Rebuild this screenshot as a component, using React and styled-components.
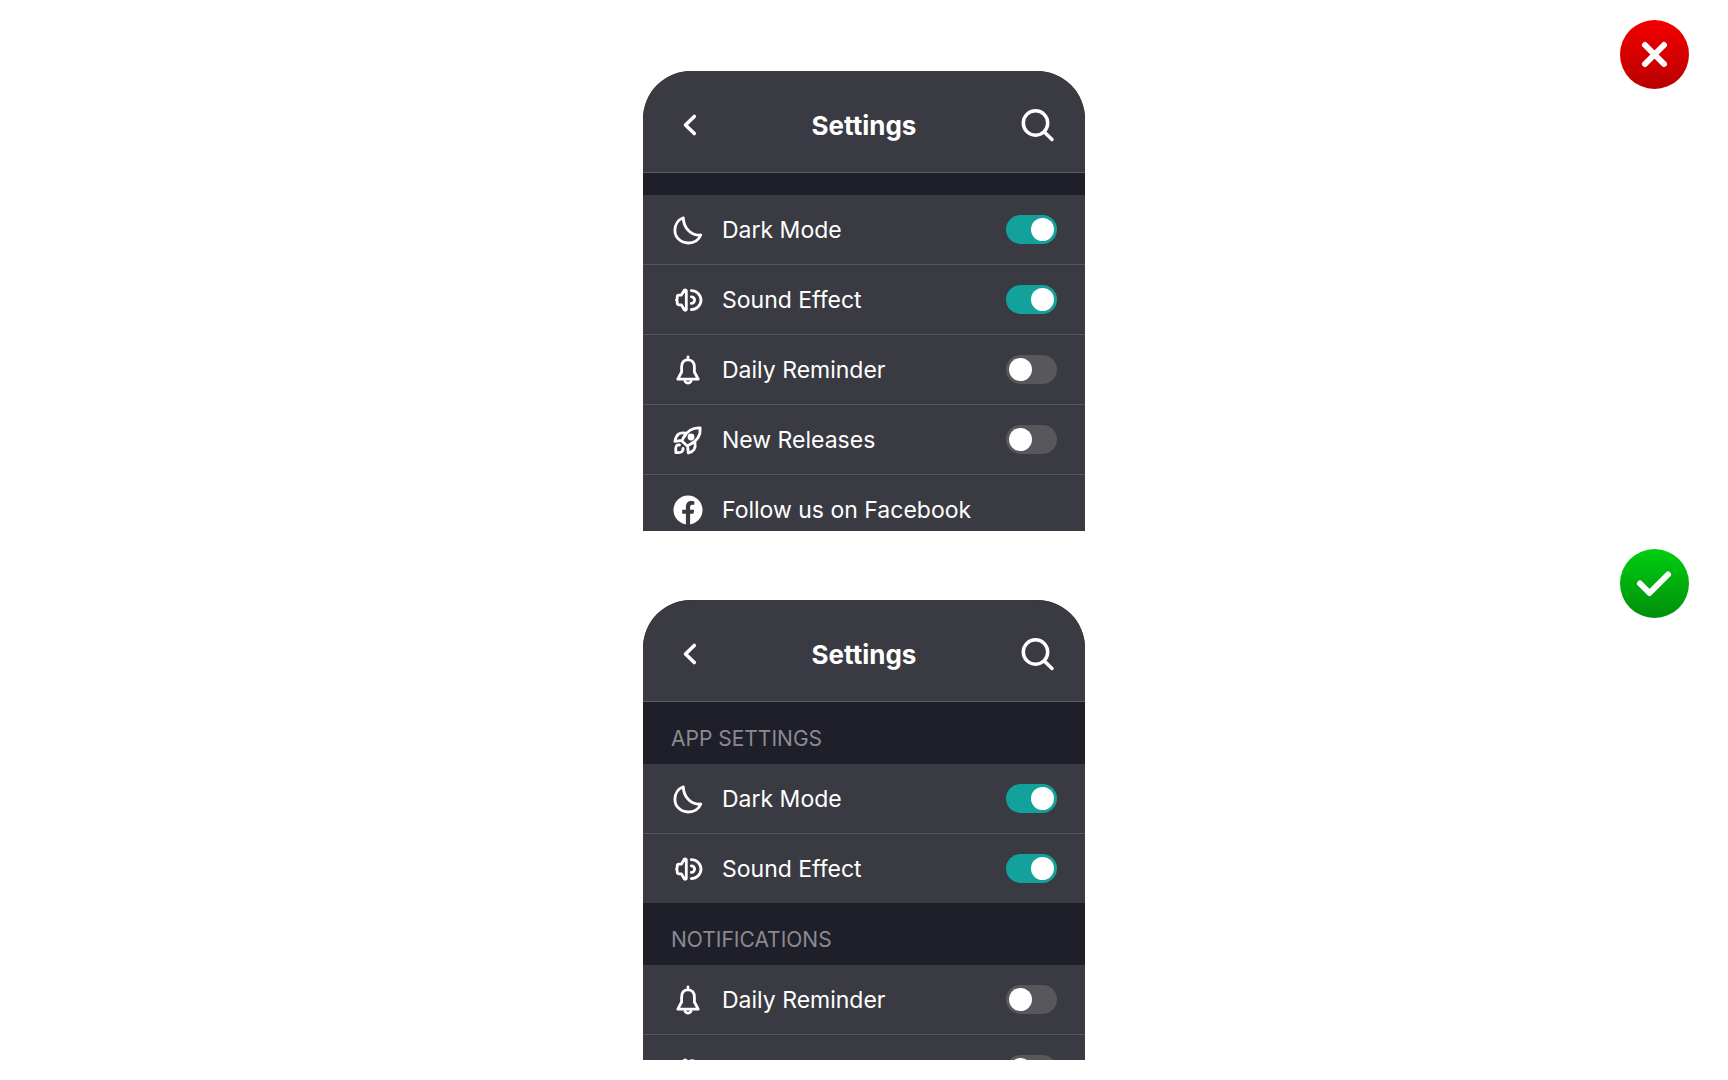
import * as React from "react"
import styled, { createGlobalStyle } from "styled-components"

const GlobalStyle = createGlobalStyle`
  * {
    box-sizing: border-box;
  }
  body {
    margin: 0;
    background: #ffffff;
    font-family: Inter, "Liberation Sans", sans-serif;
  }
`

const Page = styled.main`
  display: flex;
  flex-direction: column;
  gap: 18px;
  padding: 20px 39px;
`

const Example = styled.section`
  display: grid;
  grid-template-columns: 1fr 442px 1fr;
  align-items: start;
`

const Phone = styled.article`
  grid-column: 2;
  height: 460px;
  margin-top: 51px;
  overflow: hidden;
  border-radius: 48px 48px 0 0;
  background: #1f1f29;
  color: #ffffff;
`

const Verdict = styled.svg`
  display: block;
  justify-self: end;
  width: 69px;
  height: 69px;
`

const Header = styled.header`
  display: grid;
  grid-template-columns: 40px 1fr 40px;
  align-items: center;
  height: 102px;
  padding: 8px 28px 0;
  background: #3a3a42;
  border-bottom: 1px solid #5c5b63;
`

const Title = styled.h1`
  margin: 0;
  font-size: 26px;
  line-height: 32px;
  font-weight: 700;
  text-align: center;
`

const IconButton = styled.button`
  display: flex;
  align-items: center;
  justify-content: center;
  width: 40px;
  height: 40px;
  padding: 0;
  border: 0;
  background: none;
  color: inherit;
`

const Spacer = styled.div`
  height: 22px;
`

const GroupTitle = styled.h2`
  display: flex;
  align-items: center;
  height: 62px;
  margin: 0;
  padding: 12px 28px 0;
  color: #8b8a92;
  font-size: 21px;
  line-height: 24px;
  font-weight: 400;
  text-transform: uppercase;
`

const List = styled.ul`
  margin: 0;
  padding: 0;
  list-style: none;
`

const Row = styled.li`
  display: flex;
  align-items: center;
  height: 70px;
  padding: 0 28px;
  background: #3a3a42;
  border-bottom: 1px solid #56555d;

  &:last-child {
    height: 69px;
    border-bottom: 0;
  }
`

const RowLabel = styled.label`
  display: flex;
  flex: 1;
  align-items: center;
  gap: 17px;
  font-size: 23px;
  line-height: 28px;
`

const RowLink = styled(RowLabel)`
  color: inherit;
  text-decoration: none;
`

const Glyph = styled.svg`
  display: block;
  width: 34px;
  height: 34px;
  fill: none;
  stroke: currentColor;
  stroke-width: 2.8;
  stroke-linecap: round;
  stroke-linejoin: round;
`

const Toggle = styled.input`
  appearance: none;
  display: flex;
  align-items: center;
  width: 51px;
  height: 29px;
  margin: 0;
  padding: 0 3px;
  border-radius: 15px;
  background: #57575c;

  &::before {
    content: "";
    width: 23px;
    height: 23px;
    border-radius: 50%;
    background: #ffffff;
  }

  &:checked {
    justify-content: flex-end;
    background: #13a29b;
  }
`

const icons = {
  moon: (
    <path d="M12.300 4.800C7.400 6.600 3.900 11.500 3.900 17.200C3.900 24.500 9.800 30 17.200 30C23 30 27.800 26.800 29.800 22C20.500 23 12.500 15.500 12.300 4.800Z" />
  ),
  sound: (
    <>
      <path d="M15.300 7.500V26.700Q14.400 27.800 13.300 26.800L10.300 21.800H8Q6.200 21.800 6.200 20V18.200L5.500 17L6.200 15.800V14Q6.200 12.200 8 12.200H10.300L13.300 7.200Q14.400 6.300 15.300 7.500Z" />
      <path d="M20.300 7.600A9.700 9.500 0 0 1 20.300 26.600" />
      <path d="M20.300 13.800A3.300 3.300 0 0 1 20.300 20.400" />
    </>
  ),
  bell: (
    <>
      <path d="M17 4V6.800M17 6.800C12.500 6.800 10.600 10 10.600 14V19L6.800 26.200H27.200L23.400 19V14C23.400 10 21.500 6.800 17 6.800Z" />
      <path d="M14 28.300Q17 32 20 28.300" />
    </>
  ),
  rocket: (
    <>
      <path d="M29.200 5C21 4.500 16 8 12.300 15L10.900 18L16.200 23L19 21.600C26 18 29.800 13 29.200 5Z" />
      <circle cx="20" cy="14" r="2" fill="currentColor" />
      <path d="M14.500 10.200C8.500 8.800 5.300 11.300 3.900 18.300L9.500 17.600" />
      <path d="M24 20C25 25 22.600 28.800 17.300 30L16.800 25" />
      <path d="M8.500 22C4.900 21.500 4.300 24 4.900 29.500C10 29.900 12.500 28.800 12 25.300" />
    </>
  ),
}

const FacebookIcon = () => (
  <Glyph viewBox="0 0 34 34" aria-hidden="true">
    <circle cx="17" cy="17" r="14.500" fill="currentColor" stroke="none" />
    <path
      d="M14.900 32V20.800H11.200V16.700H14.900V13.500C14.900 9.900 17 7.900 20.300 7.900C21.900 7.900 23.300 8.200 23.300 8.200V11.700H21.500C19.700 11.700 19.100 12.800 19.100 14V16.700H23.100L22.500 20.800H19.100V32Z"
      fill="#3a3a42"
      stroke="none"
    />
  </Glyph>
)

const Setting = ({ id, icon, label, on }) => {
  const [checked, setChecked] = React.useState(Boolean(on))

  return (
    <Row>
      <RowLabel htmlFor={id}>
        <Glyph viewBox="0 0 34 34" aria-hidden="true">{icons[icon]}</Glyph>
        {label}
      </RowLabel>
      <Toggle
        id={id}
        type="checkbox"
        role="switch"
        checked={checked}
        onChange={() => setChecked(!checked)}
      />
    </Row>
  )
}

const PhoneHeader = () => (
  <Header>
    <IconButton type="button" aria-label="Back">
      <svg width="40" height="40" viewBox="0 0 40 40" fill="none" stroke="currentColor" strokeWidth="3.600" strokeLinecap="round" strokeLinejoin="round">
        <path d="M23.300 10.500L14.500 19L23.300 27.500" />
      </svg>
    </IconButton>
    <Title>Settings</Title>
    <IconButton type="button" aria-label="Search">
      <svg width="40" height="40" viewBox="0 0 40 40" fill="none" stroke="currentColor" strokeWidth="3.500" strokeLinecap="round">
        <circle cx="18.500" cy="17" r="12.200" />
        <path d="M27.300 26L35 33.500" />
      </svg>
    </IconButton>
  </Header>
)

const WrongBadge = () => (
  <Verdict viewBox="0 0 69 69" role="img" aria-label="Wrong">
    <defs>
      <linearGradient id="red" x1="0" y1="0" x2="0" y2="1">
        <stop offset="0" stopColor="#f40000" />
        <stop offset="1" stopColor="#b80000" />
      </linearGradient>
    </defs>
    <circle cx="34.500" cy="34.500" r="34.500" fill="url(#red)" />
    <path d="M25 25L44 44M44 25L25 44" stroke="#ffffff" strokeWidth="6" strokeLinecap="round" />
  </Verdict>
)

const RightBadge = () => (
  <Verdict viewBox="0 0 69 69" role="img" aria-label="Right">
    <defs>
      <linearGradient id="green" x1="0" y1="0" x2="0" y2="1">
        <stop offset="0" stopColor="#00cf10" />
        <stop offset="1" stopColor="#008e0c" />
      </linearGradient>
    </defs>
    <circle cx="34.500" cy="34.500" r="34.500" fill="url(#green)" />
    <path d="M20 34.500L29.500 44L48 25.500" fill="none" stroke="#ffffff" strokeWidth="6" strokeLinecap="round" strokeLinejoin="round" />
  </Verdict>
)

const App = () => (
  <>
    <GlobalStyle />
    <Page>
      <Example>
        <Phone>
          <PhoneHeader />
          <Spacer />
          <List>
            <Setting id="flat-dark" icon="moon" label="Dark Mode" on />
            <Setting id="flat-sound" icon="sound" label="Sound Effect" on />
            <Setting id="flat-reminder" icon="bell" label="Daily Reminder" />
            <Setting id="flat-releases" icon="rocket" label="New Releases" />
            <Row>
              <RowLink as="a" href="#facebook">
                <FacebookIcon />
                Follow us on Facebook
              </RowLink>
            </Row>
          </List>
        </Phone>
        <WrongBadge />
      </Example>
      <Example>
        <Phone>
          <PhoneHeader />
          <GroupTitle>App settings</GroupTitle>
          <List>
            <Setting id="app-dark" icon="moon" label="Dark Mode" on />
            <Setting id="app-sound" icon="sound" label="Sound Effect" on />
          </List>
          <GroupTitle>Notifications</GroupTitle>
          <List>
            <Setting id="notify-reminder" icon="bell" label="Daily Reminder" />
            <Setting id="notify-sound" icon="sound" label="Sound Effect" />
          </List>
        </Phone>
        <RightBadge />
      </Example>
    </Page>
  </>
)
export default App
